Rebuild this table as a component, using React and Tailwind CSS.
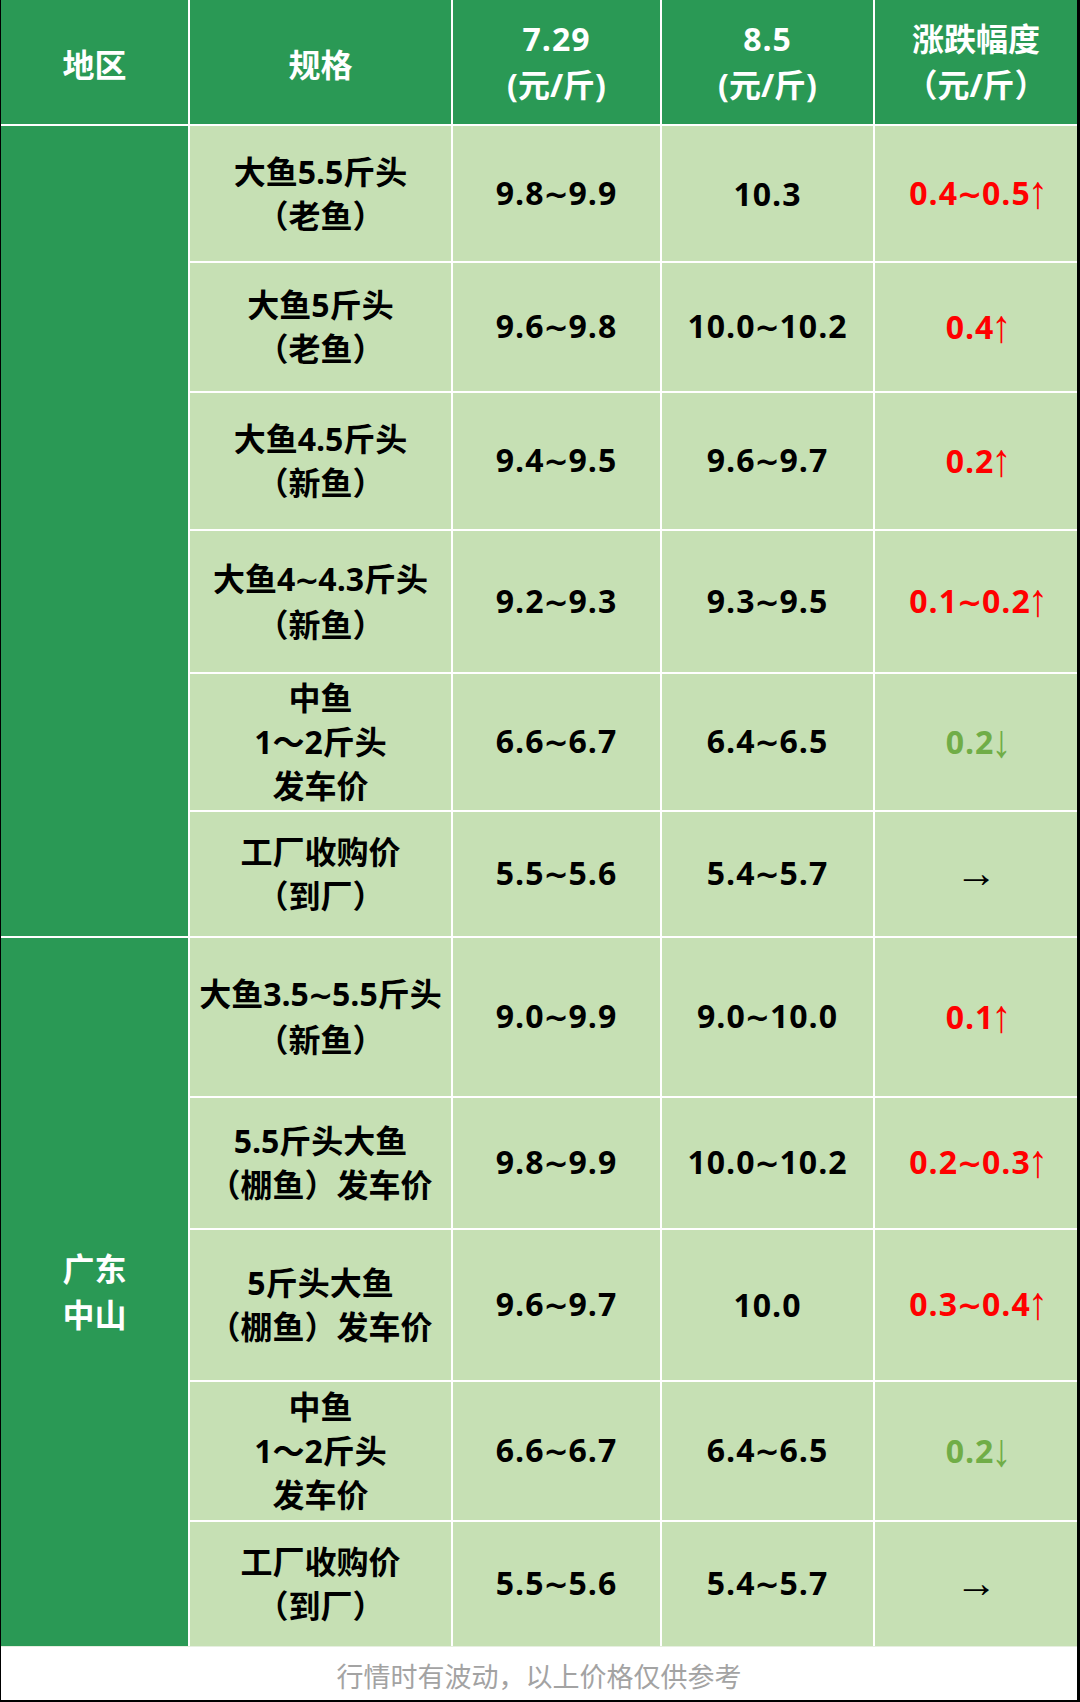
import React from "react";

const rows1 = [
  { spec: ["大鱼5.5斤头", "（老鱼）"], a: "9.8~9.9", b: "10.3", d: "0.4~0.5", dir: "up" },
  { spec: ["大鱼5斤头", "（老鱼）"], a: "9.6~9.8", b: "10.0~10.2", d: "0.4", dir: "up" },
  { spec: ["大鱼4.5斤头", "（新鱼）"], a: "9.4~9.5", b: "9.6~9.7", d: "0.2", dir: "up" },
  { spec: ["大鱼4~4.3斤头", "（新鱼）"], a: "9.2~9.3", b: "9.3~9.5", d: "0.1~0.2", dir: "up" },
  { spec: ["中鱼", "1～2斤头", "发车价"], a: "6.6~6.7", b: "6.4~6.5", d: "0.2", dir: "down" },
  { spec: ["工厂收购价", "（到厂）"], a: "5.5~5.6", b: "5.4~5.7", d: "", dir: "flat" },
];

const rows2 = [
  { spec: ["大鱼3.5~5.5斤头", "（新鱼）"], a: "9.0~9.9", b: "9.0~10.0", d: "0.1", dir: "up" },
  { spec: ["5.5斤头大鱼", "（棚鱼）发车价"], a: "9.8~9.9", b: "10.0~10.2", d: "0.2~0.3", dir: "up" },
  { spec: ["5斤头大鱼", "（棚鱼）发车价"], a: "9.6~9.7", b: "10.0", d: "0.3~0.4", dir: "up" },
  { spec: ["中鱼", "1～2斤头", "发车价"], a: "6.6~6.7", b: "6.4~6.5", d: "0.2", dir: "down" },
  { spec: ["工厂收购价", "（到厂）"], a: "5.5~5.6", b: "5.4~5.7", d: "", dir: "flat" },
];

const cell = "flex flex-col items-center justify-center text-center bg-[#c6e0b4] text-black";

function T({ text }) {
  const parts = text.split("~");
  const out = [];
  parts.forEach((p, i) => {
    if (i > 0)
      out.push(
        <span key={"t" + i} className="font-['DejaVu_Sans',sans-serif] font-bold text-[30px] mx-[-1px]">
          ~
        </span>
      );
    out.push(<span key={"p" + i}>{p}</span>);
  });
  return <>{out}</>;
}

function Change({ d, dir }) {
  if (dir === "flat") {
    return (
      <span className="font-['Liberation_Sans',sans-serif] font-normal text-[42px]">→</span>
    );
  }
  const color = dir === "up" ? "text-[#ff0000]" : "text-[#70ad47]";
  return (
    <span className={color + " tracking-[1px] whitespace-nowrap"}>
      <T text={d} />
      <span className="inline-block font-['Liberation_Sans',sans-serif] font-normal text-[40px] leading-[0] ml-[-3px] mr-[-6px] relative top-[1px] scale-y-115">
        {dir === "up" ? "↑" : "↓"}
      </span>
    </span>
  );
}

function Row({ r }) {
  return (
    <>
      <div className={cell}>
        {r.spec.map((s, i) => (
          <div key={i} className="whitespace-nowrap">
            <T text={s} />
          </div>
        ))}
      </div>
      <div className={cell + " tracking-[1px]"}>
        <div className="whitespace-nowrap">
          <T text={r.a} />
        </div>
      </div>
      <div className={cell + " tracking-[1px]"}>
        <div className="whitespace-nowrap">
          <T text={r.b} />
        </div>
      </div>
      <div className={cell}>
        <div>
          <Change d={r.d} dir={r.dir} />
        </div>
      </div>
    </>
  );
}

export default function App() {
  return (
    <div className="w-[1080px] h-[1702px] bg-white border-l border-r-[3px] border-b-2 border-black flex flex-col font-['Open_Sans','Noto_Sans_CJK_SC',sans-serif] font-bold text-[32px] leading-[44px]">
      <div className="grid grid-cols-[187px_261px_207px_211px_202px] grid-rows-[124px_135px_128px_136px_141px_136px_124px_158px_130px_150px_138px_124px] gap-[2px] bg-white">
        <div className="flex items-center justify-center bg-[#2a9955] text-white pt-[6px]">地区</div>
        <div className="flex items-center justify-center bg-[#2a9955] text-white pt-[6px]">规格</div>
        <div className="flex flex-col items-center justify-center bg-[#2a9955] text-white leading-[46px]">
          <div className="tracking-[1px]">7.29</div>
          <div>(元/斤)</div>
        </div>
        <div className="flex flex-col items-center justify-center bg-[#2a9955] text-white leading-[46px]">
          <div className="tracking-[1px]">8.5</div>
          <div>(元/斤)</div>
        </div>
        <div className="flex flex-col items-center justify-center bg-[#2a9955] text-white leading-[46px]">
          <div>涨跌幅度</div>
          <div>（元/斤）</div>
        </div>

        <div className="row-span-6 bg-[#2a9955]"></div>
        {rows1.map((r, i) => (
          <Row key={"a" + i} r={r} />
        ))}

        <div className="row-span-5 flex flex-col items-center justify-center bg-[#2a9955] text-white leading-[46px]">
          <div>广东</div>
          <div>中山</div>
        </div>
        {rows2.map((r, i) => (
          <Row key={"b" + i} r={r} />
        ))}
      </div>
      <div className="flex-1 flex items-center justify-center border-t border-[#e6efe0] font-['Noto_Sans_CJK_SC',sans-serif] font-normal text-[27px] text-[#a3a3a3] pt-[4px]">
        行情时有波动，以上价格仅供参考
      </div>
    </div>
  );
}
